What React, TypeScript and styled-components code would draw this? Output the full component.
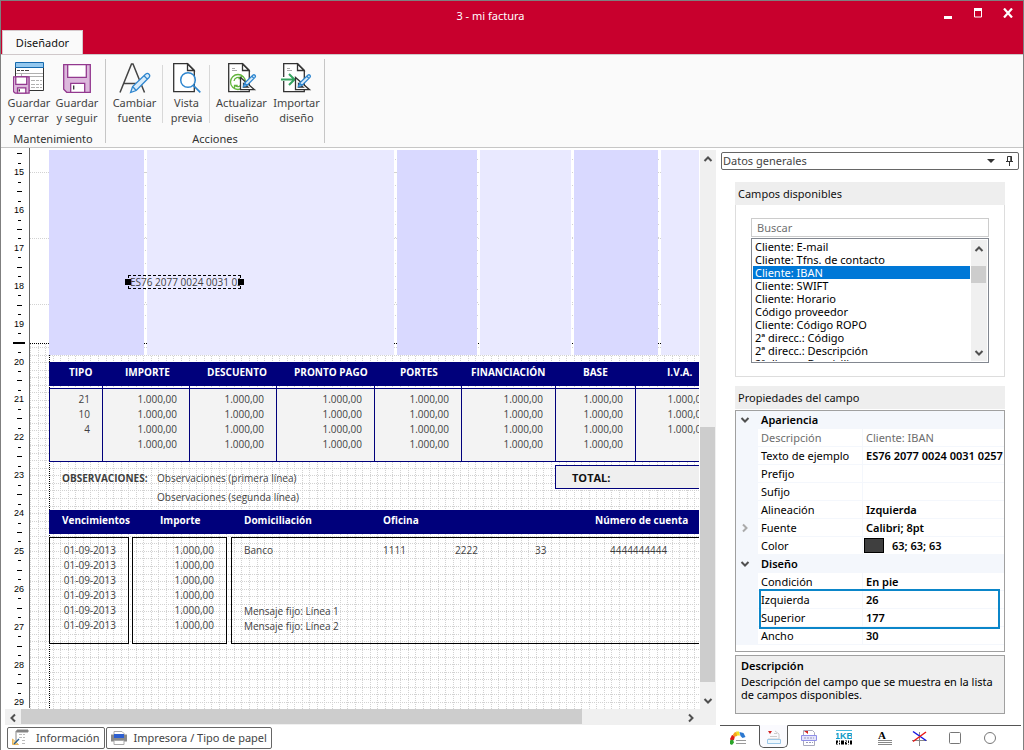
import React from "react";
import styled, { createGlobalStyle, css } from "styled-components";

const ui = `"Noto Sans", "Open Sans", sans-serif`;
const report = `"Open Sans", "Noto Sans", sans-serif`;
const navy = "#00007b";

const GlobalStyle = createGlobalStyle`
  *, *::before, *::after { box-sizing: border-box; }
  body { margin: 0; background: #fff; font: 11px/15px ${ui}; color: #000; }
  button, input, select { font: inherit; color: inherit; margin: 0; padding: 0; border: 0; background: none; border-radius: 0; }
  ul { list-style: none; margin: 0; padding: 0; }
  h2, p { margin: 0; font: inherit; }
  strong { font-weight: 600; }
  svg { display: block; }
`;

const Window = styled.div`
  display: flex;
  flex-direction: column;
  height: 100vh;
  min-height: 750px;
  border: 1px solid #7f7f7f;
  border-bottom: 0;
`;

/* ---------- title bar and ribbon ---------- */

const TitleBar = styled.header`
  display: grid;
  grid-template-columns: 41px 1fr 84px;
  grid-template-rows: 29px 24px;
  background: #c8002d;
  color: #fff;
`;

const Title = styled.div`
  grid-column: 2;
  text-align: center;
  line-height: 29px;
`;

const WindowControls = styled.div`
  display: flex;
  gap: 12px;
  padding-top: 3px;
`;

const ControlButton = styled.button`
  width: 18px;
  height: 18px;
  display: grid;
  place-items: center;
`;

const RibbonTab = styled.button`
  grid-column: 1 / 3;
  justify-self: start;
  width: 81px;
  height: 25px;
  margin-left: 1px;
  padding-bottom: 2px;
  background: #fafafa;
  color: #111;
  border: 1px solid #d5c8cb;
  border-bottom: 0;
`;

const Ribbon = styled.div`
  display: flex;
  height: 94px;
  flex: none;
  background: #fafafa;
  border-top: 1px solid #d0c8ca;
  border-bottom: 1px solid #c6c6c6;
`;

const RibbonGroup = styled.section`
  display: flex;
  flex-direction: column;
  align-items: center;
  margin: 4px 0;
  border-right: 1px solid #c6c6c6;
`;

const RibbonButtons = styled.div<{ $before?: number; $after?: number }>`
  display: flex;
  padding: 0 ${(p) => p.$after ?? 0}px 0 ${(p) => p.$before ?? 0}px;
`;

const GroupCaption = styled.div`
  margin-top: 8px;
  line-height: 14px;
  color: #333;
`;

const RibbonButton = styled.button<{ $w: number; $divided?: boolean }>`
  width: ${(p) => p.$w}px;
  height: 65px;
  display: flex;
  flex-direction: column;
  align-items: center;
  color: #444;
  white-space: nowrap;
  svg { margin: 3px 0 1px; flex: none; }
  ${(p) =>
    p.$divided &&
    css`
      background: linear-gradient(#d8d8d8, #d8d8d8) right 6px / 1px 58px no-repeat;
    `}
`;

/* ---------- workspace ---------- */

const Workspace = styled.main`
  flex: 1;
  min-height: 0;
  display: grid;
  grid-template-columns: minmax(0, 1fr) 307px;
`;

const Designer = styled.section`
  display: flex;
  flex-direction: column;
  padding: 0 0 1px 4px;
  min-height: 0;
`;

const DesignArea = styled.div`
  flex: 1;
  min-height: 0;
  display: flex;
`;

const Ruler = styled.div`
  width: 25px;
  height: 560px;
  padding: 1px 0 0 4px;
  display: flex;
  flex-direction: column;
  border-right: 1px solid #666;
  font: 9px/11px "Liberation Sans", sans-serif;
`;

const RulerStep = styled.div`
  flex: 1 1 0;
  min-height: 0;
  display: flex;
  align-items: center;
  justify-content: center;
`;

const Tick = styled.i<{ $w: number; $h?: number }>`
  width: ${(p) => p.$w}px;
  height: ${(p) => p.$h ?? 1}px;
  background: #000;
`;

const Canvas = styled.div`
  flex: 1;
  min-width: 0;
  position: relative;
  overflow: hidden;
  margin: 2px 1px 0 0;
  font: 10px/15px ${report};
  color: #3f3f3f;
`;

const GridLayer = styled.svg`
  position: absolute;
  inset: 0;
  width: 100%;
  height: 100%;
`;

const Sheet = styled.div`
  position: relative;
  width: 792px;
  padding-left: 19px;
`;

const Bands = styled.div`
  display: grid;
  grid-template-columns: 95px 247px 80px 91px 84px 1fr;
  column-gap: 3px;
  height: 205px;
`;

const Band = styled.div<{ $dark?: boolean }>`
  background: ${(p) => (p.$dark ? "#d9d9ff" : "#e9e9ff")};
`;

const TaxTable = styled.table`
  margin-top: 7px;
  width: 773px;
  table-layout: fixed;
  border-spacing: 0;
  th {
    height: 24px;
    background: ${navy};
    color: #fff;
    text-align: left;
    line-height: 15px;
    padding-bottom: 4px;
    font-weight: 700;
  }
  td {
    padding: 0 12px 0 0;
    text-align: right;
    line-height: 15px;
    height: 15px;
    background: #f3f3f3;
    border-left: 1px solid ${navy};
  }
  tbody tr:first-child td { height: 18px; padding-top: 3px; border-top: 1px solid ${navy}; }
  tbody tr:last-child td { height: 25px; padding-bottom: 9px; border-bottom: 1px solid ${navy}; }
`;

const TaxHead = styled.th<{ $indent: number }>`
  padding: 0 0 0 ${(p) => p.$indent}px;
`;

const SpacerRow = styled.tr`
  && td { height: 2px; background: none; padding: 0; line-height: 0; }
  && td:first-child { border-left-color: transparent; }
`;

const NotesRow = styled.div`
  display: grid;
  grid-template-columns: 108px 398px 1fr;
  height: 48px;
  padding-top: 3px;
  line-height: 19px;
`;

const NotesLabel = styled.strong`
  padding: 4px 0 0 13px;
  font-weight: 700;
`;

const Notes = styled.div`
  padding-top: 4px;
`;

const Total = styled.strong`
  height: 24px;
  padding-left: 16px;
  border: 1px solid ${navy};
  background: #efefef;
  color: #111;
  font-size: 11px;
  font-weight: 700;
  line-height: 23px;
`;

const DueHeader = styled.div`
  display: grid;
  grid-template-columns: 98px 84px 139px 212px 1fr;
  height: 24px;
  padding-left: 13px;
  background: ${navy};
  color: #fff;
  font-weight: 700;
  line-height: 21px;
`;

const DueBoxes = styled.div`
  display: grid;
  grid-template-columns: 80px 95px 1fr;
  column-gap: 3px;
  margin-top: 3px;
  height: 107px;
`;

const DueList = styled.ul`
  border: 1px solid #000;
  padding: 5px 12px 0 0;
  text-align: right;
`;

const BankBox = styled.div`
  margin-left: 1px;
  border: 1px solid #000;
  padding: 5px 0 0 12px;
  display: flex;
  flex-direction: column;
  gap: 46px;
`;

const BankLine = styled.div`
  display: grid;
  grid-template-columns: 139px 72px 80px 75px 1fr;
`;

const SelectedField = styled.div`
  position: absolute;
  left: 98px;
  top: 125px;
  width: 113px;
  height: 14px;
  border: 1px dashed #000;
  line-height: 12px;
  padding-left: 1px;
  white-space: nowrap;
`;

const FieldText = styled.div`
  overflow: hidden;
`;

const Handle = styled.i<{ $end?: boolean }>`
  position: absolute;
  top: 3px;
  ${(p) => (p.$end ? "right: -4px;" : "left: -4px;")}
  width: 6px;
  height: 6px;
  background: #000;
`;

/* ---------- scroll bars ---------- */

const VScroll = styled.div`
  display: flex;
  flex-direction: column;
  width: 16px;
  margin-top: 2px;
  flex: none;
  background: #f0f0f0;
`;

const ListScroll = styled(VScroll)`
  margin-top: 0;
`;

const HScroll = styled.div`
  display: flex;
  height: 16px;
  flex: none;
  padding-right: 17px;
  background: #f0f0f0;
`;

const ScrollButton = styled.button`
  width: 16px;
  height: 17px;
  flex: none;
  display: grid;
  place-items: center;
`;

const Thumb = styled.div<{ $before: number; $size: number; $after: number; $row?: boolean }>`
  flex: 1;
  display: flex;
  flex-direction: ${(p) => (p.$row ? "row" : "column")};
  &::before { content: ""; flex: ${(p) => p.$before} 0 0; }
  &::after { content: ""; flex: ${(p) => p.$after} 0 0; }
  i {
    flex: ${(p) => p.$size} 0 0;
    background: #cdcdcd;
    margin: ${(p) => (p.$row ? "0 0 1px" : "0 1px 0 0")};
  }
`;

const BottomBar = styled.nav`
  display: flex;
  gap: 1px;
  padding: 2px 0 0 2px;
`;

const BottomButton = styled.button`
  height: 22px;
  display: flex;
  align-items: center;
  gap: 7px;
  padding: 0 4px 1px 4px;
  border: 1px solid #666;
  border-radius: 2px;
  color: #444;
`;

/* ---------- side panel ---------- */

const SidePanel = styled.aside`
  display: flex;
  flex-direction: column;
  padding: 4px 0 0 4px;
  min-height: 0;
`;

const PanelPicker = styled.div`
  display: flex;
  align-items: center;
  height: 18px;
  margin: 0 4px 0 1px;
  border: 1px solid #666;
  border-radius: 2px;
  color: #333;
`;

const PickerSelect = styled.select`
  appearance: none;
  flex: 1;
  height: 16px;
  padding: 0 0 1px 1px;
  color: #444;
`;

const PickerArrow = styled.svg`
  margin-right: 8px;
  pointer-events: none;
`;

const PinButton = styled.button`
  width: 14px;
  height: 14px;
  margin-right: 1px;
`;

const GroupBox = styled.section<{ $top: number }>`
  margin: ${(p) => p.$top}px 18px 0 15px;
`;

const GroupTitle = styled.h2`
  height: 23px;
  padding-left: 3px;
  background: #eee;
  line-height: 24px;
  color: #111;
`;

const FieldsBody = styled.div`
  border: 1px solid #ddd;
  border-top: 0;
  padding: 13px 15px;
`;

const SearchInput = styled.input`
  display: block;
  width: 100%;
  height: 19px;
  padding: 0 5px 1px;
  border: 1px solid #ccc;
  background: #fff;
  &::placeholder { color: #707070; opacity: 1; }
`;

const FieldListBox = styled.div`
  display: flex;
  height: 125px;
  margin-top: 1px;
  padding: 1px;
  border: 1px solid #828790;
`;

const FieldList = styled.ul`
  flex: 1;
  overflow: hidden;
  margin-right: 1px;
`;

const FieldItem = styled.li<{ $selected?: boolean }>`
  height: 13px;
  padding-left: 2px;
  line-height: 13px;
  white-space: nowrap;
  ${(p) => p.$selected && "background: #0078d7; color: #fff;"}
`;

const PropertyBox = styled.div`
  position: relative;
  height: 242px;
  margin-top: 1px;
  border: 1px solid #a0a0a0;
  overflow: hidden;
`;

const PropertyTable = styled.table`
  width: 100%;
  table-layout: fixed;
  border-spacing: 0;
  th, td {
    height: 18px;
    padding: 0 0 0 3px;
    line-height: 16px;
    text-align: left;
    white-space: nowrap;
    overflow: hidden;
    border-bottom: 1px solid #f4f7fc;
  }
  th { font-weight: 400; }
  td:last-child { font-weight: 600; border-left: 1px solid #f4f7fc; }
`;

const Gutter = styled.td`
  &&& { background: #f4f7fc; padding-left: 4px; border: 0; }
`;

const CategoryCell = styled.th`
  &&& { background: #f4f7fc; font-weight: 600; }
`;

const PropertyRow = styled.tr<{ $muted?: boolean }>`
  ${(p) => p.$muted && css`color: #6d6d6d; && td:last-child { font-weight: 400; }`}
`;

const ColorValue = styled.span`
  display: flex;
  align-items: center;
  gap: 8px;
  margin-left: -2px;
  &::before {
    content: "";
    width: 20px;
    height: 15px;
    border: 1px solid #000;
    background: #3f3f3f;
  }
`;

const Highlight = styled.div`
  position: absolute;
  top: 178px;
  left: 23px;
  right: 4px;
  height: 40px;
  border: 2px solid #0b86c9;
  pointer-events: none;
`;

const HelpBox = styled.div`
  height: 59px;
  margin-top: 3px;
  padding: 2px 5px;
  border: 1px solid #a0a0a0;
  background: #efefef;
  p { margin-top: 2px; line-height: 13px; }
`;

const ToolTabs = styled.nav`
  display: flex;
  margin: 11px 2px 0 0;
  border-top: 1px solid #555;
`;

const ToolTab = styled.button<{ $active?: boolean; $spaced?: boolean }>`
  width: 35px;
  height: 23px;
  margin-left: ${(p) => (p.$spaced ? 6 : 0)}px;
  flex: none;
  display: grid;
  place-items: center;
  ${(p) =>
    p.$active &&
    css`
      width: 29px;
      margin: -1px 3px 0 4px;
      padding-top: 1px;
      background: #fafafe;
      border: 1px solid #555;
      border-top-color: #fafafe;
      border-radius: 0 0 5px 5px;
    `}
`;

/* ---------- icons ---------- */

const Disk = ({ x, y, s }: { x: number; y: number; s: number }) => (
  <g transform={`translate(${x} ${y}) scale(${s})`} strokeWidth={1.3 / s} stroke="#93398f">
    <path d="M.7.7h26.6v27.6H3.7l-3-3z" fill="#dcb8dc" />
    <path d="M4.7.7h18.6v12.6H4.7zM7.7 28.300v-9h14v9z" fill="#fff" />
    <path d="M10.700 21.500v4" stroke="#333" fill="none" />
  </g>
);

const IconSaveClose = () => (
  <svg width="32" height="32" viewBox="0 0 32 32">
    <path d="M2.500 1.500h28v27h-28z" fill="#fff" stroke="#333" />
    <path d="M2.500.5h28v5h-28z" fill="#93c7ee" stroke="#1569ad" />
    <path d="M4 8.500h3m1 0h3m1 0h4" stroke="#444" />
    <path d="M3 11.500h27M8.500 12v4M9 14.500h21M18 18.500h4m1 0h3m1 0h2M18 22.500h4m1 0h3m1 0h2M18 25.500h4m1 0h3m1 0h2" stroke="#b0b0b0" />
    <Disk x={0} y={14.5} s={0.59} />
  </svg>
);

const IconSave = () => (
  <svg width="32" height="32" viewBox="0 0 32 32">
    <Disk x={2} y={2} s={1} />
  </svg>
);

const Pencil = ({ x, y, s = 1 }: { x: number; y: number; s?: number }) => (
  <path
    transform={`translate(${x} ${y}) scale(${s})`}
    d="M.6 19.500l2-6L15.500 1.200q2-1.500 3.500 0t0 3.300L6.200 17.500zM2.600 13.500l3.600 4M14 2.800l3.300 3.300"
    fill="#d9ecfa"
    stroke="#2f86cf"
    strokeWidth={1.3 / s}
  />
);

const IconFont = () => (
  <svg width="32" height="32" viewBox="0 0 32 32" fill="none">
    <path d="M1 30.500L12.500 2h1.500l11.500 28.500M5 21.500h17" stroke="#444" strokeWidth="1.500" />
    <Pencil x={11} y={11} />
  </svg>
);

const Page = ({ x = 0 }: { x?: number }) => (
  <g transform={`translate(${x} 0)`}>
    <path d="M.7 1.700h14l6.600 6.600v21.400H.7z" fill="#fff" stroke="#333" strokeWidth="1.300" />
    <path d="M14.500 2v6.500h6.500z" fill="#fff" stroke="#333" strokeWidth="1.300" />
  </g>
);

const IconPreview = () => (
  <svg width="32" height="32" viewBox="0 0 32 32">
    <Page x={2} />
    <circle cx="17" cy="18" r="7.300" fill="#fff" fillOpacity=".85" stroke="#2f86cf" strokeWidth="1.500" />
    <path d="M22.300 23.300l7 7" stroke="#2f86cf" strokeWidth="1.700" />
  </svg>
);

const SetSquare = () => (
  <>
    <path d="M14.500 15.500v12.200h14zM17.500 21.500v3.500h4.500z" fill="#fff" stroke="#333" strokeWidth="1.300" />
    <Pencil x={17} y={12.5} s={0.63} />
  </>
);

const IconUpdate = () => (
  <svg width="32" height="32" viewBox="0 0 32 32" fill="none">
    <Page x={2} />
    <path d="M6 6.500h3M6 8.500h5" stroke="#aaa" />
    <circle cx="12" cy="20" r="7.500" stroke="#62b53c" strokeWidth="1.300" fill="#fff" />
    <path d="M8 19a4.200 4.200 0 0 1 7-2.500M15.500 13.500v3.200h-3.200M16 21a4.200 4.200 0 0 1-7 2.500M8.500 26.500v-3.200h3.200" stroke="#62b53c" strokeWidth="1.300" />
    <SetSquare />
  </svg>
);

const IconImport = () => (
  <svg width="32" height="32" viewBox="0 0 32 32" fill="none">
    <Page x={2} />
    <path d="M6 6.500h3M6 8.500h5" stroke="#aaa" />
    <path d="M0 17h13" stroke="#fff" strokeWidth="4" />
    <path d="M0 17.500h13M8 12l5.500 5.500L8 23" stroke="#35a45f" strokeWidth="2" />
    <SetSquare />
  </svg>
);

const turns = { up: 0, right: 90, down: 180, left: 270 };
const Chevron = ({ dir, color = "#505050" }: { dir: keyof typeof turns; color?: string }) => (
  <svg width="10" height="10" viewBox="0 0 10 10" fill="none">
    <path d="M1.500 7L5 3.500 8.500 7" stroke={color} strokeWidth="2" transform={`rotate(${turns[dir]} 5 5)`} />
  </svg>
);

const IconInfo = () => (
  <svg width="17" height="17" viewBox="0 0 17 17" fill="none">
    <path d="M5 1h11v2H4.500zM4 2v10" fill="#808080" stroke="#888" />
    <path d="M7 5.500h6M7 8.500h6M10 11.500h4M10 14.500h3" stroke="#bbb" strokeDasharray="3 1" />
    <path d="M.5 10v5.500h6z" fill="#fbd98b" stroke="#e8b45a" />
    <path d="M2 15l5-5" stroke="#2b5f8f" strokeWidth="1.500" />
  </svg>
);

const IconPrinter = () => (
  <svg width="16" height="16" viewBox="0 0 16 16">
    <path d="M3 1.500h8l2 2V6H3z" fill="#fff" stroke="#aaa" />
    <path d="M0 4.500h16v7H0z" fill="#8a8a8a" />
    <path d="M3 4h10v4H3z" fill="#2d5fd0" />
    <path d="M3 10.500h10v4H3z" fill="#fff" stroke="#aaa" />
  </svg>
);

const IconPin = () => (
  <svg width="14" height="14" viewBox="0 0 14 14" fill="none" stroke="#333">
    <path d="M4.500 2.500h4v5h-4zM3 7.500h7M6.500 8v4" />
    <path d="M8 2.500v5" strokeWidth="1.500" />
  </svg>
);

const tools: { label: string; active?: boolean; spaced?: boolean; art: React.ReactNode }[] = [
  {
    label: "Colores",
    art: (
      <>
        <path d="M0 9l2-4 3 1-1 4-3 1z" fill="#e01818" />
        <path d="M0 10.500l3-1 1 3-2 2.500-2-1z" fill="#2aa52a" />
        <path d="M3 4.500l2-2.500 3 1-1 3-3 1z" fill="#f5a020" />
        <path d="M6 1.500l3 0 1 4-3 0z" fill="#f2e020" />
        <path d="M9.500 2l4 1 2 4-3 1-2-2z" fill="#2c78d0" />
        <path d="M6 10.500h10M6 13.500h10" stroke="#999" />
      </>
    ),
  },
  {
    label: "Cabecera",
    active: true,
    art: (
      <>
        <path d="M2 2h4L4 5z" fill="#d02020" />
        <path d="M9 2l4 3v5H2M4 7.500h7M8 4.500h3" fill="none" stroke="#ccc" />
        <path d="M1.500 10.500h13v4h-13z" fill="#eef7fd" stroke="#9cc8e8" />
      </>
    ),
  },
  {
    label: "Impresión",
    art: (
      <>
        <path d="M2.500.5h9l2 2v13h-11z" fill="#fff" stroke="#aab" />
        <path d="M3 1h4v3z" fill="#d02020" />
        <path d="M.5 5.500h15v5H.5z" fill="#e4e4fb" stroke="#8f8fe8" />
        <path d="M3 8h10M5 12.500h7" stroke="#99b" strokeDasharray="2 1" />
      </>
    ),
  },
  {
    label: "Código de barras",
    art: (
      <>
        <path d="M0 .5h16" stroke="#45b8dc" />
        <text x="8" y="9" textAnchor="middle" fontSize="9" fontWeight="700" fontFamily="Liberation Sans">
          <tspan fill="#109ac6">1KB</tspan>
        </text>
        <path d="M0 12.500h16" stroke="#000" strokeWidth="4" strokeDasharray="2 1 1 1 3 1" />
        <path d="M1 13.500l4-2M9 11l4 3" stroke="#fff" />
      </>
    ),
  },
  {
    label: "Texto",
    spaced: true,
    art: (
      <>
        <text x="5" y="9" textAnchor="middle" fontSize="11" fontWeight="700" fontFamily="Liberation Serif">A</text>
        <path d="M1 10.500h14M1 12.500h14M1 14.500h14" stroke="#888" />
      </>
    ),
  },
  {
    label: "Líneas",
    art: (
      <>
        <path d="M0 10.500h15M7.500 2v14" stroke="#888" />
        <path d="M1 1.500l13 9" stroke="#1515e0" strokeWidth="1.500" />
        <path d="M1 11.500l13-9.500" stroke="#e81515" strokeWidth="1.500" />
      </>
    ),
  },
  { label: "Rectángulo", art: <rect x="2.500" y="2.500" width="11" height="11" rx="1" fill="none" stroke="#777" /> },
  { label: "Elipse", art: <circle cx="8" cy="8" r="5.500" fill="none" stroke="#777" /> },
];

/* ---------- report data ---------- */

const amount = "1.000,00";

const taxColumns = [
  { title: "TIPO", width: 53, indent: 20, values: ["21", "10", "4", ""] },
  { title: "IMPORTE", width: 87, indent: 23 },
  { title: "DESCUENTO", width: 87, indent: 18 },
  { title: "PRONTO PAGO", width: 98, indent: 18 },
  { title: "PORTES", width: 87, indent: 26 },
  { title: "FINANCIACIÓN", width: 94, indent: 10 },
  { title: "BASE", width: 80, indent: 28 },
  { title: "I.V.A.", width: 84, indent: 32, values: [amount, amount, amount, ""] },
  { title: "", width: 103, indent: 0, values: ["", "", "", ""] },
];

const fields = [
  "Cliente: E-mail",
  "Cliente: Tfns. de contacto",
  "Cliente: IBAN",
  "Cliente: SWIFT",
  "Cliente: Horario",
  "Código proveedor",
  "Cliente: Código ROPO",
  "2ª direcc.: Código",
  "2ª direcc.: Descripción",
  "2ª direcc.: Domicilio",
];

type Prop = { name: string; value?: string; muted?: boolean; expandable?: boolean; color?: boolean };
const categories: { name: string; props: Prop[] }[] = [
  {
    name: "Apariencia",
    props: [
      { name: "Descripción", value: "Cliente: IBAN", muted: true },
      { name: "Texto de ejemplo", value: "ES76 2077 0024 0031 0257 5" },
      { name: "Prefijo" },
      { name: "Sufijo" },
      { name: "Alineación", value: "Izquierda" },
      { name: "Fuente", value: "Calibri; 8pt", expandable: true },
      { name: "Color", value: "63; 63; 63", color: true },
    ],
  },
  {
    name: "Diseño",
    props: [
      { name: "Condición", value: "En pie" },
      { name: "Izquierda", value: "26" },
      { name: "Superior", value: "177" },
      { name: "Ancho", value: "30" },
    ],
  },
];

/* One centimetre takes four ruler steps: the number and three ticks. */
const rulerSteps = Array.from({ length: 59 }, (_, i) => {
  const step = (i + 2) % 4;
  if (step === 0) return <RulerStep key={i}>{15 + (i - 2) / 4}</RulerStep>;
  if (i === 20) return <RulerStep key={i}><Tick $w={12} $h={2} /></RulerStep>;
  return <RulerStep key={i}><Tick $w={step === 2 ? 5 : 3} /></RulerStep>;
});

const CELL = 7.55;
const GRID_TOP = 197;
const gapDots = [115, 365, 447, 542, 628];

const DesignGrid = () => (
  <GridLayer stroke="#d2d2d2" strokeDasharray="1 1" shapeRendering="crispEdges">
    {Array.from({ length: 200 }, (_, i) => {
      const x = Math.round(i * CELL) + 0.5;
      return <line key={i} x1={x} x2={x} y1={GRID_TOP - 3} y2="100%" />;
    })}
    {Array.from({ length: 90 }, (_, i) => {
      const y = Math.round(GRID_TOP + i * CELL) + 0.5;
      return <line key={i} x1="0" x2="100%" y1={y} y2={y} />;
    })}
    {[22.5, 88.5, 154.5].map((y) => <line key={y} x1="0" x2="100%" y1={y} y2={y} />)}
    {gapDots.map((x) => (
      <line key={x} x1={x + 0.5} x2={x + 0.5} y1="9" y2="190" strokeDasharray="1 12" />
    ))}
    <line x1="0" x2="100%" y1="193.500" y2="193.500" stroke="#000" />
    <line x1="19.500" x2="19.500" y1="193" y2="100%" stroke="#000" />
  </GridLayer>
);

export default function App() {
  return (
    <>
      <GlobalStyle />
      <Window>
        <TitleBar>
          <Title>3 - mi factura</Title>
          <WindowControls>
            <ControlButton aria-label="Minimizar">
              <svg width="10" height="12"><path d="M1 9h8v3H1z" fill="#fff" /></svg>
            </ControlButton>
            <ControlButton aria-label="Maximizar">
              <svg width="10" height="10"><path d="M1.500 1h7v8h-7z" fill="none" stroke="#fff" /><path d="M1 0h8v3H1z" fill="#fff" /></svg>
            </ControlButton>
            <ControlButton aria-label="Cerrar">
              <svg width="10" height="10"><path d="M1 .5l8 9m0-9l-8 9" stroke="#fff" strokeWidth="2.200" /></svg>
            </ControlButton>
          </WindowControls>
          <RibbonTab>Diseñador</RibbonTab>
        </TitleBar>

        <Ribbon>
          <RibbonGroup>
            <RibbonButtons $before={4} $after={4}>
              <RibbonButton $w={48}><IconSaveClose /><span>Guardar<br />y cerrar</span></RibbonButton>
              <RibbonButton $w={48}><IconSave /><span>Guardar<br />y seguir</span></RibbonButton>
            </RibbonButtons>
            <GroupCaption>Mantenimiento</GroupCaption>
          </RibbonGroup>
          <RibbonGroup>
            <RibbonButtons $after={4}>
              <RibbonButton $w={57} $divided><IconFont /><span>Cambiar<br />fuente</span></RibbonButton>
              <RibbonButton $w={47} $divided><IconPreview /><span>Vista<br />previa</span></RibbonButton>
              <RibbonButton $w={63}><IconUpdate /><span>Actualizar<br />diseño</span></RibbonButton>
              <RibbonButton $w={47}><IconImport /><span>Importar<br />diseño</span></RibbonButton>
            </RibbonButtons>
            <GroupCaption>Acciones</GroupCaption>
          </RibbonGroup>
        </Ribbon>

        <Workspace>
          <Designer>
            <DesignArea>
              <Ruler>{rulerSteps}</Ruler>
              <Canvas>
                <DesignGrid />
                <Sheet>
                  <Bands>
                    <Band $dark /><Band /><Band $dark /><Band /><Band $dark /><Band />
                  </Bands>

                  <TaxTable>
                    <colgroup>
                      {taxColumns.map((c, i) => <col key={i} width={c.width} />)}
                    </colgroup>
                    <thead>
                      <tr>{taxColumns.map((c, i) => <TaxHead key={i} $indent={c.indent}>{c.title}</TaxHead>)}</tr>
                      <SpacerRow>{taxColumns.map((_, i) => <td key={i} />)}</SpacerRow>
                    </thead>
                    <tbody>
                      {[0, 1, 2, 3].map((r) => (
                        <tr key={r}>
                          {taxColumns.map((c, i) => <td key={i}>{c.values ? c.values[r] : amount}</td>)}
                        </tr>
                      ))}
                    </tbody>
                  </TaxTable>

                  <NotesRow>
                    <NotesLabel>OBSERVACIONES:</NotesLabel>
                    <Notes>
                      <p>Observaciones (primera línea)</p>
                      <p>Observaciones (segunda línea)</p>
                    </Notes>
                    <Total>TOTAL:</Total>
                  </NotesRow>

                  <DueHeader>
                    <span>Vencimientos</span>
                    <span>Importe</span>
                    <span>Domiciliación</span>
                    <span>Oficina</span>
                    <span>Número de cuenta</span>
                  </DueHeader>
                  <DueBoxes>
                    <DueList>{[1, 2, 3, 4, 5, 6].map((n) => <li key={n}>01-09-2013</li>)}</DueList>
                    <DueList>{[1, 2, 3, 4, 5, 6].map((n) => <li key={n}>{amount}</li>)}</DueList>
                    <BankBox>
                      <BankLine>
                        <span>Banco</span><span>1111</span><span>2222</span><span>33</span><span>4444444444</span>
                      </BankLine>
                      <div>
                        <p>Mensaje fijo: Línea 1</p>
                        <p>Mensaje fijo: Línea 2</p>
                      </div>
                    </BankBox>
                  </DueBoxes>
                </Sheet>
                <SelectedField>
                  <FieldText>ES76 2077 0024 0031 0257 5</FieldText>
                  <Handle />
                  <Handle $end />
                </SelectedField>
              </Canvas>
              <VScroll>
                <ScrollButton aria-label="Subir"><Chevron dir="up" /></ScrollButton>
                <Thumb $before={260} $size={255} $after={10}><i /></Thumb>
                <ScrollButton aria-label="Bajar"><Chevron dir="down" /></ScrollButton>
              </VScroll>
            </DesignArea>
            <HScroll>
              <ScrollButton aria-label="Izquierda"><Chevron dir="left" /></ScrollButton>
              <Thumb $row $before={0} $size={560} $after={101}><i /></Thumb>
              <ScrollButton aria-label="Derecha"><Chevron dir="right" /></ScrollButton>
            </HScroll>
            <BottomBar>
              <BottomButton><IconInfo />Información</BottomButton>
              <BottomButton><IconPrinter />Impresora / Tipo de papel</BottomButton>
            </BottomBar>
          </Designer>

          <SidePanel>
            <PanelPicker>
              <PickerSelect aria-label="Panel"><option>Datos generales</option></PickerSelect>
              <PickerArrow width="8" height="4"><path d="M0 0h8L4 4z" fill="#333" /></PickerArrow>
              <PinButton aria-label="Fijar panel"><IconPin /></PinButton>
            </PanelPicker>

            <GroupBox $top={12}>
              <GroupTitle>Campos disponibles</GroupTitle>
              <FieldsBody>
                <SearchInput placeholder="Buscar" aria-label="Buscar" />
                <FieldListBox>
                  <FieldList role="listbox" aria-label="Campos disponibles">
                    {fields.map((f) => (
                      <FieldItem key={f} role="option" aria-selected={f === "Cliente: IBAN"} $selected={f === "Cliente: IBAN"}>
                        {f}
                      </FieldItem>
                    ))}
                  </FieldList>
                  <ListScroll>
                    <ScrollButton aria-label="Subir"><Chevron dir="up" /></ScrollButton>
                    <Thumb $before={9} $size={17} $after={60}><i /></Thumb>
                    <ScrollButton aria-label="Bajar"><Chevron dir="down" /></ScrollButton>
                  </ListScroll>
                </FieldListBox>
              </FieldsBody>
            </GroupBox>

            <GroupBox $top={9}>
              <GroupTitle>Propiedades del campo</GroupTitle>
              <PropertyBox>
                <PropertyTable>
                  <colgroup><col width="22" /><col width="104" /><col /></colgroup>
                  {categories.map((c) => (
                    <tbody key={c.name}>
                      <tr>
                        <Gutter><Chevron dir="down" /></Gutter>
                        <CategoryCell colSpan={2}>{c.name}</CategoryCell>
                      </tr>
                      {c.props.map((p) => (
                        <PropertyRow key={p.name} $muted={p.muted}>
                          <Gutter>{p.expandable && <Chevron dir="right" color="#aaa" />}</Gutter>
                          <th scope="row">{p.name}</th>
                          <td>{p.color ? <ColorValue>{p.value}</ColorValue> : p.value}</td>
                        </PropertyRow>
                      ))}
                    </tbody>
                  ))}
                </PropertyTable>
                <Highlight />
              </PropertyBox>
              <HelpBox>
                <strong>Descripción</strong>
                <p>Descripción del campo que se muestra en la lista de campos disponibles.</p>
              </HelpBox>
            </GroupBox>

            <ToolTabs>
              {tools.map((t) => (
                <ToolTab key={t.label} aria-label={t.label} $active={t.active} $spaced={t.spaced}>
                  <svg width="16" height="16" viewBox="0 0 16 16">{t.art}</svg>
                </ToolTab>
              ))}
            </ToolTabs>
          </SidePanel>
        </Workspace>
      </Window>
    </>
  );
}
